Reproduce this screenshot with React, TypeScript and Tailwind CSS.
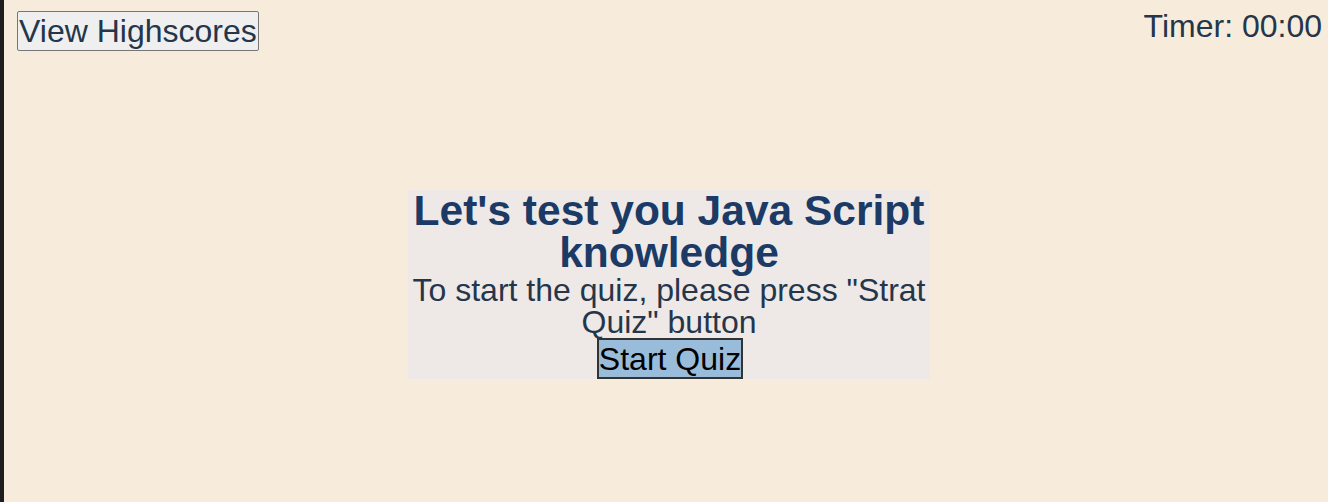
import React from "react";

export default function App() {
  return (
    <div
      className="min-h-screen w-full bg-[#F7ECDB] border-l-4 border-[#1e1e1e] text-[#25364B]"
      style={{ fontFamily: '"Liberation Sans", Arial, Helvetica, sans-serif' }}
    >
      <header className="flex items-start justify-between pt-[11px] pl-[13px] pr-[6px]">
        <button className="h-[40px] px-[1px] py-[3px] text-[32px] leading-none bg-[#EFEFEF] border border-[#767676] rounded-[2px] text-[#25364B]">
          View Highscores
        </button>
        <div className="-mt-[1px] text-[32px] leading-none">Timer: 00:00</div>
      </header>
      <main className="flex justify-center pl-[6px] mt-[139px]">
        <section className="w-[522px] bg-[#EEE9E7] flex flex-col items-center text-center">
          <h1 className="text-[42.5px] leading-[42px] font-bold text-[#1B3A66]">
            Let's test you Java Script knowledge
          </h1>
          <p className="text-[32px] leading-none">
            To start the quiz, please press "Strat Quiz" button
          </p>
          <button className="h-[41px] px-[0px] py-[2px] ml-[2px] text-[32px] leading-none bg-[#9ABCDB] border-2 border-[#333333] text-black">
            Start Quiz
          </button>
        </section>
      </main>
    </div>
  );
}
